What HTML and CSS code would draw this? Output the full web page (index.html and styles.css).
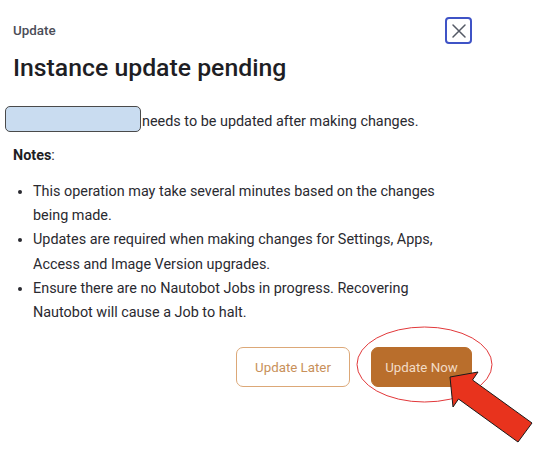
FILE: index.html
```html
<!DOCTYPE html>
<html lang="en">
<head>
<meta charset="utf-8">
<title>Instance update pending</title>
<link rel="stylesheet" href="styles.css">
</head>
<body>
<div class="dialog">
  <div class="header">
    <span class="eyebrow">Update</span>
    <button class="close" aria-label="Close">
      <svg width="16" height="16" viewBox="0 0 16 16"><path d="M2 2 L14 14 M14 2 L2 14" stroke="#555a66" stroke-width="1.5" fill="none" stroke-linecap="round"/></svg>
    </button>
  </div>
  <h1 class="title">Instance update pending</h1>
  <div class="message">
    <span class="redacted"></span>
    <span class="msg-text">needs to be updated after making changes.</span>
  </div>
  <p class="notes"><strong>Notes</strong>:</p>
  <ul class="list">
    <li>This operation may take several minutes based on the changes being made.</li>
    <li>Updates are required when making changes for Settings, Apps, Access and Image Version upgrades.</li>
    <li>Ensure there are no Nautobot Jobs in progress. Recovering Nautobot will cause a Job to halt.</li>
  </ul>
  <div class="actions">
    <button class="btn btn-later">Update Later</button>
    <button class="btn btn-now">Update Now</button>
  </div>
</div>
<svg class="annotation" width="538" height="457" viewBox="0 0 538 457">
  <ellipse cx="424.5" cy="364.5" rx="67.5" ry="37.5" fill="none" stroke="#e2383a" stroke-width="1"/>
  <polygon points="450,377 478,372 472.5,380 532,423 518,442 458.5,399 453,407" fill="#e8331d" stroke="#1a1a1a" stroke-width="1" stroke-linejoin="miter"/>
</svg>
</body>
</html>
```
FILE: styles.css
```css
html, body {
  margin: 0;
  padding: 0;
  background: #ffffff;
}
body {
  font-family: Roboto, "Liberation Sans", sans-serif;
  color: #222228;
  position: relative;
  width: 538px;
  height: 457px;
  overflow: hidden;
}
.dialog {
  width: 459px;
  padding: 17px 0 0 13px;
}
.header {
  display: flex;
  justify-content: space-between;
  align-items: center;
  height: 27px;
}
.eyebrow {
  font-size: 13.4px;
  color: #4b4d57;
  font-weight: 500;
}
.close {
  width: 27px;
  height: 27px;
  box-sizing: border-box;
  border: 2px solid #3f53c6;
  border-radius: 4px;
  background: #fff;
  padding: 0;
  display: flex;
  align-items: center;
  justify-content: center;
}
.title {
  margin: 10px 0 0;
  font-size: 24.8px;
  line-height: 28px;
  font-weight: 500;
  color: #1e1e24;
}
.message {
  display: flex;
  align-items: flex-end;
  margin-top: 24px;
  margin-left: -8px;
}
.redacted {
  width: 136px;
  height: 26px;
  box-sizing: border-box;
  background: #c9dcf0;
  border: 1px solid #4a4a4a;
  border-radius: 5px;
  flex: none;
}
.msg-text {
  font-size: 14.4px;
  line-height: 20px;
  color: #2a2a30;
  padding-left: 1px;
}
.notes {
  margin: 14px 0 0;
  font-size: 14.4px;
  line-height: 20px;
  color: #2a2a30;
}
.notes strong {
  font-weight: 700;
  color: #1e1e24;
}
.list {
  margin: 14px 0 0;
  padding-left: 20px;
  width: 418px;
  font-size: 14.4px;
  line-height: 24.2px;
  color: #2a2a30;
}
.actions {
  display: flex;
  justify-content: flex-end;
  gap: 21px;
  margin-top: 22px;
}
.btn {
  height: 40px;
  box-sizing: border-box;
  border-radius: 7px;
  font-family: Roboto, "Liberation Sans", sans-serif;
  font-size: 13.3px;
  padding: 0;
}
.btn-later {
  width: 114px;
  background: #ffffff;
  border: 1.5px solid #dca878;
  color: #c8905a;
}
.btn-now {
  width: 101px;
  background: #b96e2c;
  border: 1px solid #b96e2c;
  color: #f2dcc6;
}
.annotation {
  position: absolute;
  left: 0;
  top: 0;
  pointer-events: none;
}
```
